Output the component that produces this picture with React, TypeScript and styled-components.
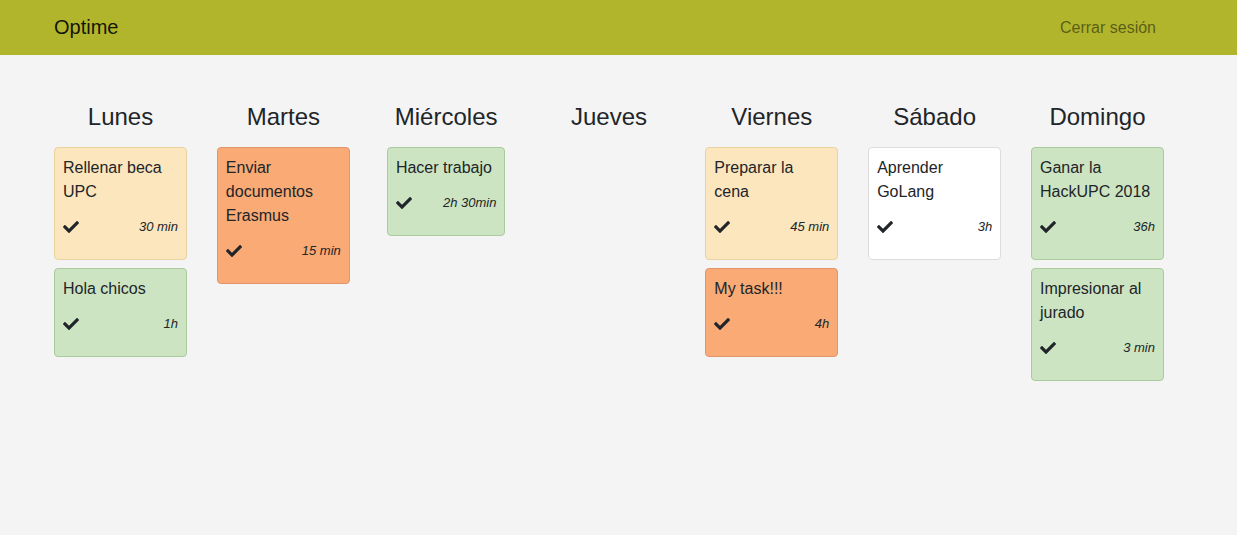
import { FC } from "react";
import styled, { createGlobalStyle } from "styled-components";
import { FaCheck } from "react-icons/fa";

type Tone = "yellow" | "orange" | "green" | "white";

type Task = {
  title: string;
  time: string;
  tone: Tone;
};

type Day = {
  name: string;
  tasks: Task[];
};

const days: Day[] = [
  {
    name: "Lunes",
    tasks: [
      { title: "Rellenar beca UPC", time: "30 min", tone: "yellow" },
      { title: "Hola chicos", time: "1h", tone: "green" },
    ],
  },
  {
    name: "Martes",
    tasks: [{ title: "Enviar documentos Erasmus", time: "15 min", tone: "orange" }],
  },
  {
    name: "Miércoles",
    tasks: [{ title: "Hacer trabajo", time: "2h 30min", tone: "green" }],
  },
  { name: "Jueves", tasks: [] },
  {
    name: "Viernes",
    tasks: [
      { title: "Preparar la cena", time: "45 min", tone: "yellow" },
      { title: "My task!!!", time: "4h", tone: "orange" },
    ],
  },
  {
    name: "Sábado",
    tasks: [{ title: "Aprender GoLang", time: "3h", tone: "white" }],
  },
  {
    name: "Domingo",
    tasks: [
      { title: "Ganar la HackUPC 2018", time: "36h", tone: "green" },
      { title: "Impresionar al jurado", time: "3 min", tone: "green" },
    ],
  },
];

const tones: Record<Tone, { bg: string; border: string }> = {
  yellow: { bg: "#fbe6bd", border: "#e9d3a4" },
  orange: { bg: "#f9aa75", border: "#e2946a" },
  green: { bg: "#cce4c2", border: "#abcb9f" },
  white: { bg: "#ffffff", border: "#dcdcdc" },
};

const GlobalStyle = createGlobalStyle`
  body {
    margin: 0;
    background: #f4f4f4;
    font-family: "Liberation Sans", Arial, sans-serif;
    color: #212529;
  }
`;

export default function App() {
  return (
    <>
      <GlobalStyle />
      <Navbar>
        <Brand>Optime</Brand>
        <Logout href="#">Cerrar sesión</Logout>
      </Navbar>
      <Board>
        {days.map((day) => (
          <DayColumn key={day.name} day={day} />
        ))}
      </Board>
    </>
  );
}

const DayColumn: FC<{ day: Day }> = ({ day }) => (
  <Column>
    <DayTitle>{day.name}</DayTitle>
    <Stack>
      {day.tasks.map((t) => (
        <Card key={t.title} tone={t.tone}>
          <CardTitle>{t.title}</CardTitle>
          <CardFooter>
            <FaCheck size={16} />
            <Time>{t.time}</Time>
          </CardFooter>
        </Card>
      ))}
    </Stack>
  </Column>
);

const Navbar = styled.nav`
  height: 55px;
  background: #b0b52c;
  display: flex;
  align-items: center;
  justify-content: space-between;
  width: 1110px;
  padding: 0 73px 0 54px;
`;

const Brand = styled.span`
  font-size: 20px;
  color: rgba(0, 0, 0, 0.9);
`;

const Logout = styled.a`
  font-size: 16px;
  color: rgba(0, 0, 0, 0.5);
  text-decoration: none;
  padding: 0 8px;
`;

const Board = styled.main`
  display: grid;
  grid-template-columns: repeat(7, 133px);
  column-gap: 29.83px;
  padding: 48px 0 0 54px;
`;

const Column = styled.section`
  display: flex;
  flex-direction: column;
  align-items: center;
`;

const DayTitle = styled.h3`
  margin: 0 0 15px;
  font-size: 24px;
  font-weight: 400;
  line-height: 1.2;
`;

const Stack = styled.div`
  display: flex;
  flex-direction: column;
  max-width: 133px;
  gap: 8px;
`;

const Card = styled.div<{ tone: Tone }>`
  background: ${(p) => tones[p.tone].bg};
  border: 1px solid ${(p) => tones[p.tone].border};
  border-radius: 4px;
  padding: 8px 8px 20px;
`;

const CardTitle = styled.div`
  font-size: 16px;
  line-height: 24px;
`;

const CardFooter = styled.div`
  margin-top: 11px;
  height: 24px;
  display: flex;
  align-items: center;
  justify-content: space-between;
  gap: 31px;
  color: #212529;
`;

const Time = styled.span`
  font-size: 13px;
  font-style: italic;
`;
